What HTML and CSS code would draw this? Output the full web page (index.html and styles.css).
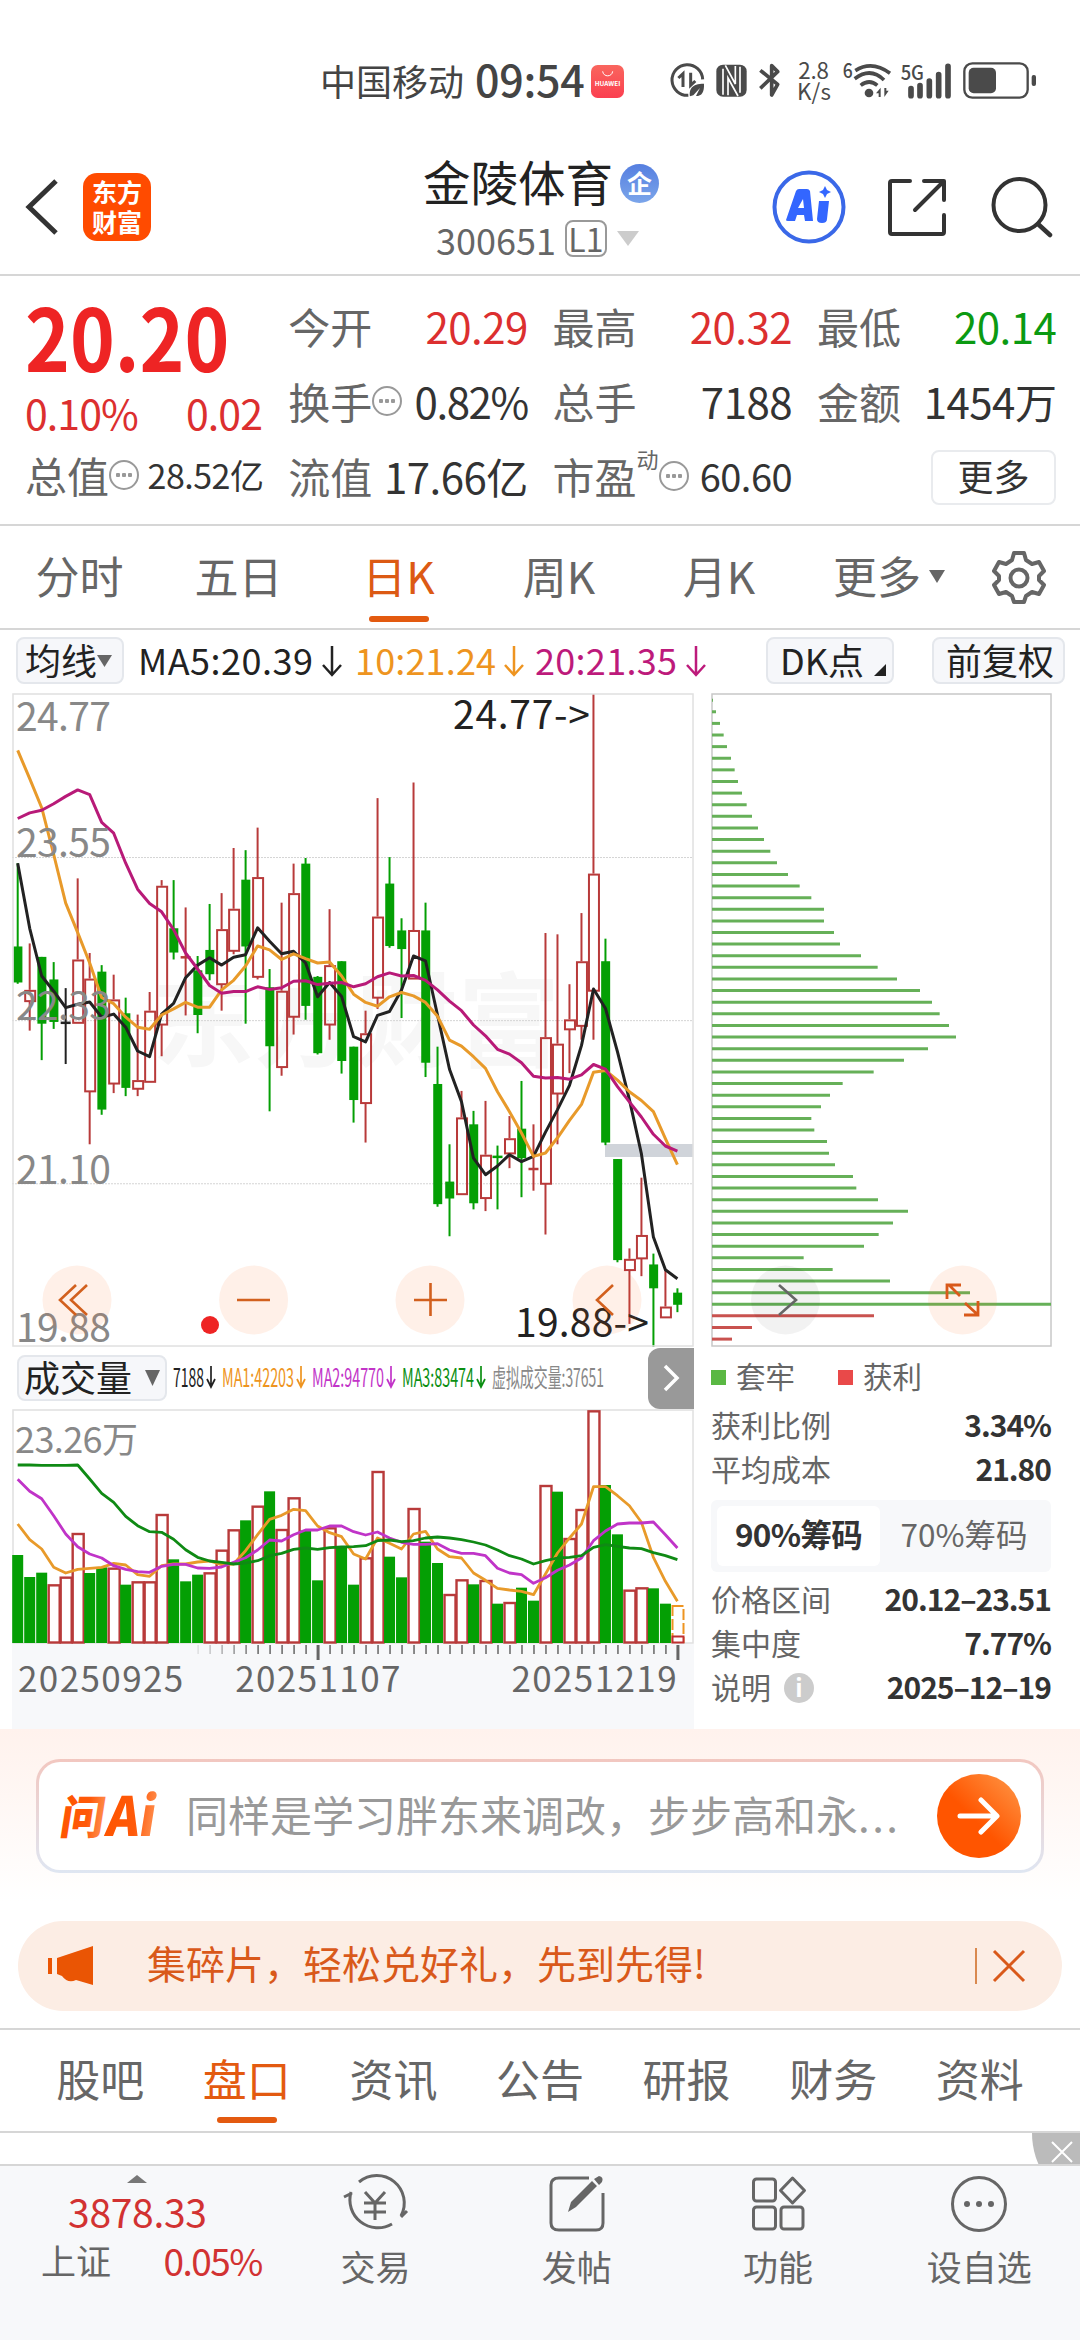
FILE: index.html
```html
<!DOCTYPE html>
<html lang="zh-CN">
<head>
<meta charset="utf-8">
<title>金陵体育 300651</title>
<link rel="stylesheet" href="styles.css">
</head>
<body>
<div class="status">
  <span class="carrier">中国移动</span>
  <span class="clock">09:54</span>
  <svg class="store" width="33" height="33" viewBox="0 0 99 99"><defs><linearGradient id="st" x1="0" y1="0" x2="0" y2="1"><stop offset="0" stop-color="#f9665e"/><stop offset="1" stop-color="#fb3f50"/></linearGradient></defs><rect width="99" height="99" rx="20" fill="url(#st)"/><path d="M35 19c2 18 28 18 30 0" fill="none" stroke="#fff" stroke-width="3"/><text x="11" y="63" textLength="77" lengthAdjust="spacingAndGlyphs" class="store-txt">HUAWEI</text></svg>
  <svg class="sys" width="370" height="64" viewBox="264 -3 1110 192">
    <g fill="none" stroke="#4a4a4a" stroke-width="9">
      <path d="M368 88A46 46 0 1 0 325 136M295 84l14-13v40M332 68v38l14-13"/>
      <path d="M541 61l52 42-18 32V47l18 18-52 50" stroke-width="11" stroke-linejoin="round"/>
      <path d="M826 62q50-32 104 8M824 86q48-36 88 4M842 106q26-20 50 0" stroke-width="11"/>
      <rect x="1153" y="40" width="190" height="103" rx="24" stroke-width="7"/>
      <path d="M993 116v21M1020 107v30M1048 93v44M1076 74v63M1104 49v88" stroke-width="17" stroke-linecap="round"/>
    </g>
    <g fill="#4a4a4a">
      <path d="M372 101c-38 0-45 18-42 38l10-3 20-22-12 24c18 0 25-12 24-37z"/>
      <rect x="409" y="44" width="91" height="96" rx="20"/>
      <circle cx="867" cy="129" r="13"/><path d="M888 130l14-17v28h-6v-11zM926 122l-13 19v-27h6v8z"/>
      <rect x="1166" y="53" width="82" height="77" rx="15"/><rect x="1355" y="75" width="13" height="33" rx="6"/>
      <text x="655" y="86" font-size="67" textLength="92">2.8</text>
      <text x="651" y="149" font-size="67" textLength="102">K/s</text>
      <text x="788" y="84" font-size="60" font-weight="500" textLength="30" lengthAdjust="spacingAndGlyphs">6</text>
      <text x="962" y="90" font-size="60" font-weight="500" textLength="70" lengthAdjust="spacingAndGlyphs">5G</text>
    </g>
    <path d="M429 56v78M480 50v78M444 136V84l30 54M436 46l30 56V48" fill="none" stroke="#fff" stroke-width="5"/>
  </svg>
</div>

<header class="head">
  <svg class="back" width="34" height="56" viewBox="0 0 34 56"><path d="M31 2L4 28l27 26" fill="none" stroke="#333" stroke-width="5"/></svg>
  <div class="logo"><span>东方</span><span>财富</span></div>
  <div class="stock">
    <div class="name"><span>金陵体育</span><i class="badge">企</i></div>
    <div class="code"><span>300651</span><i class="lv">L1</i><svg width="22" height="15" viewBox="0 0 22 15"><path d="M0 0h22L11 15z" fill="#ccc"/></svg></div>
  </div>
  <svg class="ai" width="74" height="74" viewBox="0 0 74 74"><circle cx="37" cy="37" r="34.5" fill="none" stroke="#3a68e8" stroke-width="4"/><path d="M14 50l10-29q1-2 3-2h8q2 0 3 2l3 30h-8l-1-6h-7l-2 6h-7q-2 0-2-1zM26 38h6l-1-9zM47 31h10l-2 18q0 4-5 4t-5-4zM53 16l2 4 4 2-4 2-2 4-2-4-4-2 4-2z" fill="#3366ff" fill-rule="evenodd"/></svg>
  <svg class="share" width="60" height="60" viewBox="0 0 60 60"><g fill="none" stroke="#333" stroke-width="4" stroke-linecap="round" stroke-linejoin="round"><path d="M23 4H5q-2 0-2 2v49q0 2 2 2h50q2 0 2-2V38M37 4h20v19M56 5L28 33"/></g></svg>
  <svg class="find" width="62" height="62" viewBox="0 0 62 62"><circle cx="28.500" cy="29" r="26" fill="none" stroke="#333" stroke-width="4"/><path d="M47 48l12 11" stroke="#333" stroke-width="4.500" stroke-linecap="round"/></svg>
</header>

<section class="quote">
  <div class="col">
    <div class="price"><span>20.20</span></div>
    <div class="chg red"><span>0.10%</span><span>0.02</span></div>
    <div class="cell"><label>总值</label><i class="tip"></i><b class="small">28.52亿</b></div>
  </div>
  <div class="col">
    <div class="cell"><label>今开</label><b class="red">20.29</b></div>
    <div class="cell"><label>换手</label><i class="tip"></i><b class="pct">0.82%</b></div>
    <div class="cell"><label>流值</label><b>17.66亿</b></div>
  </div>
  <div class="col">
    <div class="cell"><label>最高</label><b class="red">20.32</b></div>
    <div class="cell"><label>总手</label><b>7188</b></div>
    <div class="cell"><label>市盈</label><sup>动</sup><i class="tip"></i><b class="mid">60.60</b></div>
  </div>
  <div class="col">
    <div class="cell"><label>最低</label><b class="green">20.14</b></div>
    <div class="cell"><label>金额</label><b>1454万</b></div>
    <div class="cell"><span class="more">更多</span></div>
  </div>
</section>

<nav class="periods">
  <span>分时</span><span>五日</span><span class="on">日K</span><span>周K</span><span>月K</span>
  <span class="drop">更多<svg width="16" height="13" viewBox="0 0 16 13"><path d="M0 0h16L8 13z" fill="#666"/></svg></span>
  <svg class="gear" width="54" height="54" viewBox="0 0 54 54"><g fill="none" stroke="#666" stroke-width="4" stroke-linejoin="round"><path d="M22 3h10l2 7 6 4 7-2 5 9-5 5v4l5 5-5 9-7-2-6 4-2 6H22l-2-6-6-4-7 2-5-9 5-5v-4l-5-5 5-9 7 2 6-4z"/><circle cx="27" cy="28" r="8.500"/></g></svg>
</nav>

<div class="ma">
  <span class="btn b1">均线<svg width="15" height="12" viewBox="0 0 15 12"><path d="M0 0h15L7.500 12z" fill="#666"/></svg></span>
  <svg class="ma-txt" width="580" height="56" viewBox="134 632 580 56">
    <g font-size="36"><text x="138" y="674" textLength="175" fill="#222">MA5:20.39</text><text x="355" y="674" textLength="141" fill="#ee9420">10:21.24</text><text x="535" y="674" textLength="142" fill="#bd1a7b">20:21.35</text></g>
    <g fill="none" stroke-width="2.500"><path d="M332 645v29m-9-10l9 10 9-10" stroke="#222"/><path d="M514 645v29m-9-10l9 10 9-10" stroke="#ee9420"/><path d="M696 645v29m-9-10l9 10 9-10" stroke="#bd1a7b"/></g>
  </svg>
  <span class="btn b2">DK点<svg width="12" height="12" viewBox="0 0 12 12"><path d="M12 0v12H0z" fill="#222"/></svg></span>
  <span class="btn b3">前复权</span>
</div>

<main class="charts">
  <div class="left">
    <svg id="kline" width="682" height="654" viewBox="0 0 682 654"></svg>
    <div class="volbar">
      <span class="btn b4">成交量<svg width="15" height="16" viewBox="0 0 15 16"><path d="M0 0h15L7.500 16z" fill="#666"/></svg></span>
      <svg width="440" height="44" viewBox="0 0 440 44">
        <g font-size="25"><text x="0" y="31" textLength="31" lengthAdjust="spacingAndGlyphs" fill="#222">7188</text><text x="49" y="31" textLength="72" lengthAdjust="spacingAndGlyphs" fill="#ee9420">MA1:42203</text><text x="139" y="31" textLength="72" lengthAdjust="spacingAndGlyphs" fill="#c234c8">MA2:94770</text><text x="229" y="31" textLength="72" lengthAdjust="spacingAndGlyphs" fill="#0b8f12">MA3:83474</text><text x="319" y="31" textLength="112" lengthAdjust="spacingAndGlyphs" fill="#888">虚拟成交量:37651</text></g>
        <g fill="none" stroke-width="1.700"><path d="M38 10v21m-4-8l4 8 4-8" stroke="#222"/><path d="M128 10v21m-4-8l4 8 4-8" stroke="#ee9420"/><path d="M218 10v21m-4-8l4 8 4-8" stroke="#c234c8"/><path d="M308 10v21m-4-8l4 8 4-8" stroke="#0b8f12"/></g>
      </svg>
      <span class="next"><svg width="17" height="28" viewBox="0 0 17 28"><path d="M2 2l12 12L2 26" fill="none" stroke="#fff" stroke-width="3.500"/></svg></span>
    </div>
    <svg id="volume" width="682" height="235" viewBox="0 0 682 235"></svg>
    <div class="axis">
      <svg id="ticks" width="682" height="18" viewBox="0 0 682 18"></svg>
      <div class="dates"><span>20250925</span><span>20251107</span><span>20251219</span></div>
    </div>
  </div>
  <aside class="chips">
    <svg id="chips" width="341" height="654" viewBox="0 0 341 654"></svg>
    <div class="legend"><i class="g"></i><span>套牢</span><i class="r"></i><span>获利</span></div>
    <div class="row"><span>获利比例</span><b>3.34%</b></div>
    <div class="row"><span>平均成本</span><b>21.80</b></div>
    <div class="toggle"><span class="on">90%筹码</span><span>70%筹码</span></div>
    <div class="row"><span>价格区间</span><b>20.12–23.51</b></div>
    <div class="row"><span>集中度</span><b>7.77%</b></div>
    <div class="row"><span>说明</span><i class="info">i</i><b>2025–12–19</b></div>
  </aside>
</main>

<section class="ask">
  <div class="askbox">
    <svg class="asklogo" width="100" height="70" viewBox="0 -12 100 70"><defs><linearGradient id="lg"><stop offset="0" stop-color="#f50"/><stop offset=".6" stop-color="#ff5a0a"/><stop offset="1" stop-color="#ff9152"/></linearGradient></defs><g transform="skewX(-9)" fill="url(#lg)"><text x="6" y="41" font-size="46" font-weight="900" textLength="44" lengthAdjust="spacingAndGlyphs">问</text><text x="52" y="43" font-size="54" font-weight="900" textLength="49" lengthAdjust="spacingAndGlyphs">Ai</text></g></svg>
    <span class="hint">同样是学习胖东来调改，步步高和永<span class="dots">...</span></span>
    <span class="go"><svg width="44" height="38" viewBox="0 0 44 38"><path d="M3 19h36M24 3l16 16-16 16" fill="none" stroke="#fff" stroke-width="5" stroke-linecap="round" stroke-linejoin="round"/></svg></span>
  </div>
</section>

<div class="notice">
  <svg width="46" height="40" viewBox="0 0 46 40"><path d="M0 12h4v16H0zM9 12L45 0v39l-17-5q-8 4-14-4l-5-2z" fill="#ea5504"/></svg>
  <span class="msg">集碎片，轻松兑好礼，先到先得!</span>
  <i class="bar"></i>
  <svg width="34" height="34" viewBox="0 0 34 34"><path d="M2 2l30 30M32 2L2 32" stroke="#d9591a" stroke-width="3"/></svg>
</div>

<nav class="tabs"><span>股吧</span><span class="on">盘口</span><span>资讯</span><span>公告</span><span>研报</span><span>财务</span><span>资料</span></nav>
<div class="gap"><span class="close"><svg width="22" height="22" viewBox="0 0 22 22"><path d="M1 1l20 20M21 1L1 21" stroke="#fff" stroke-width="2"/></svg></span></div>

<footer class="dock">
  <div class="index">
    <svg width="20" height="8" viewBox="0 0 20 8"><path d="M10 0l10 8H0z" fill="#777"/></svg>
    <span class="pt">3878.33</span>
    <div class="idx"><span>上证</span><span class="pc">0.05%</span></div>
  </div>
  <div class="item"><svg width="70" height="62" viewBox="0 0 70 62"><g fill="none" stroke="#666" stroke-width="3"><path d="M19 9A27.500 27.500 0 0 1 61 43M61 44l6-6M52 51A28 28 0 0 1 11 19M12 20l-8 4"/><path d="M25 19l10 11 10-11M24 30h22M24 39h22M35 30v17"/></g></svg><span>交易</span></div>
  <div class="item"><svg width="70" height="62" viewBox="0 0 70 62"><path d="M47 5H17q-8 0-8 7v38q0 7 8 7h37q7 0 7-7V20" fill="none" stroke="#666" stroke-width="3"/><path d="M26 39l3-10L50 8l5 5-21 21zM52 6l5-3q5 1 3 6l-3 3z" fill="#666"/></svg><span>发帖</span></div>
  <div class="item"><svg width="70" height="62" viewBox="0 0 70 62"><g fill="none" stroke="#666" stroke-width="3"><rect x="10.500" y="6" width="22" height="22" rx="3"/><rect x="10.500" y="34" width="22" height="22" rx="3"/><rect x="38" y="34" width="22" height="22" rx="3"/><path d="M49.500 5l12 12.500-12 12.500-12-12.500z" stroke-linejoin="round"/></g></svg><span>功能</span></div>
  <div class="item"><svg width="70" height="62" viewBox="0 0 70 62"><circle cx="35" cy="31" r="26.500" fill="none" stroke="#666" stroke-width="3"/><g fill="#666"><circle cx="23" cy="31" r="3"/><circle cx="35" cy="31" r="3"/><circle cx="47" cy="31" r="3"/></g></svg><span>设自选</span></div>
</footer>
<script src="chart.js"></script>
</body>
</html>
```
FILE: styles.css
```css
* { box-sizing: border-box; }
body { margin: 0; width: 1080px; height: 2340px; overflow: hidden; background: #fff; color: #333; font-family: "Noto Sans CJK SC", "Noto Sans", sans-serif; line-height: 1; }
i, b { font-style: normal; font-weight: 400; }
svg { display: block; flex: none; }
span, label, b, sup { white-space: nowrap; }
.red { color: #dc2f2f !important; }
.green { color: #0b9a12 !important; }

.status { height: 140px; padding: 22px 0 0 320px; display: flex; align-items: center; color: #444; }
.carrier { font-size: 36px; width: 155px; padding-bottom: 3px; }
.clock { font-size: 43px; width: 116px; letter-spacing: -.3px; padding-bottom: 6px; font-weight: 500; }
.sys { margin-left: 44px; }
.store-txt { font-size: 17px; font-weight: 700; fill: #fff; }

.head { height: 136px; border-bottom: 2px solid #d6d6d6; display: flex; align-items: center; padding-left: 25px; }
.logo { width: 68px; height: 68px; margin-left: 24px; border-radius: 14px; background: #ff4b00; color: #fff; font-size: 25px; font-weight: 700; display: flex; flex-direction: column; align-items: center; justify-content: center; gap: 4px; padding-bottom: 3px; }
.logo span { line-height: 26px; }
.stock { width: 240px; margin-left: 272px; padding-bottom: 1px; }
.name { display: flex; align-items: center; gap: 7px; font-size: 47.5px; color: #222; height: 64px; }
.name > span { padding-bottom: 2px; }
.badge { width: 39px; height: 39px; margin-top: 4px; border-radius: 50%; background: linear-gradient(#567fe0, #7ba5ea); color: #fff; font-size: 25px; font-weight: 700; display: flex; align-items: center; justify-content: center; padding-bottom: 3px; }
.code { display: flex; align-items: center; font-size: 36px; color: #666; margin-left: 13px; height: 50px; }
.lv { border: 2px solid #999; border-radius: 8px; width: 42px; height: 37px; margin: 0 10px 0 9px; font-size: 32px; display: flex; align-items: center; justify-content: center; padding-bottom: 2px; }
.ai { margin-left: 109px; }
.share { margin-left: 41px; }
.find { margin-left: 44px; }

.quote { height: 250px; padding: 15px 25px 0; border-bottom: 2px solid #d6d6d6; display: grid; grid-template-columns: 237px 238px 238px 238px; column-gap: 26.300px; }
.price { height: 96px; line-height: 88px; font-size: 86px; font-weight: 700; color: #ee2424; }
.price span { display: inline-block; transform: scaleX(.885); transform-origin: 0 50%; }
.chg { height: 53px; line-height: 50px; font-size: 41px; letter-spacing: -.9px; display: flex; justify-content: space-between; }
.cell { height: 75px; display: flex; align-items: center; padding-bottom: 6px; }
.cell label { font-size: 42px; color: #666; }
.cell b { margin: 0 -1.5px 0 auto; font-size: 42px; letter-spacing: -.5px; }
.cell b.pct { letter-spacing: -1.4px; }
.cell b.small { font-size: 34px; }
.cell b.mid { font-size: 38px; }
.cell sup { font-size: 22px; color: #666; margin-bottom: 36px; vertical-align: baseline; }
.tip { width: 30px; height: 30px; border: 2px solid #999; border-radius: 50%; background: radial-gradient(circle at 7px 13px, #999 2px, transparent 2.500px), radial-gradient(circle at 13px 13px, #999 2px, transparent 2.500px), radial-gradient(circle at 19px 13px, #999 2px, transparent 2.500px); }
.more { margin: 3px -1px 0 auto; width: 125px; height: 55px; border: 2px solid #e9ebee; border-radius: 8px; font-size: 36px; line-height: 46px; text-align: center; }

.periods { height: 104px; border-bottom: 2px solid #d6d6d6; display: grid; grid-template-columns: 159px 159px 161px 160px 160px 180px 72px; align-items: center; text-align: center; font-size: 44px; color: #666; }
.periods span, .tabs span { height: 100%; display: flex; align-items: center; justify-content: center; border-bottom: 6px solid transparent; padding-top: 1px; }
.on { position: relative; color: #dc5a14; }
.periods .on::after, .tabs .on::after { content: ""; position: absolute; bottom: 0; left: 50%; margin-left: -30px; width: 60px; height: 6px; border-radius: 3px; background: #e35a10; }
.drop svg { margin: 4px 0 0 8px; }
.gear { margin-left: 13px; }

.ma { height: 63px; display: flex; align-items: center; padding: 0 0 2px 16px; font-size: 36px; }
.btn { height: 47px; border: 2px solid #e4e7ec; border-radius: 8px; background: #f6f7fa; color: #222; display: flex; align-items: center; padding: 0 0 4px 7px; }
.btn svg { margin-top: 4px; }
.b1 { width: 108px; }
.ma-txt { margin-left: 10px; }
.b2 { width: 128px; margin-left: 52px; padding-left: 12px; }
.b2 svg { margin: 22px 0 0 10px; }
.b3 { width: 133px; margin-left: 38px; padding-left: 12px; }

.charts { display: flex; height: 1036px; }
.left { width: 682px; margin-left: 12px; }
.volbar { height: 62px; display: flex; align-items: center; padding-left: 5px; }
.b4 { width: 150px; height: 46px; font-size: 36px; padding-left: 5px; }
.b4 svg { margin-left: 13px; }
.volbar > svg { margin-left: 6px; }
.next { margin-left: auto; width: 46px; height: 61px; background: #999; border-radius: 12px 0 0 12px; display: flex; align-items: center; justify-content: center; }
.axis { height: 85px; background: #f7f8fa; }
.dates { display: flex; justify-content: space-between; padding: 0 16px 0 6px; font-size: 35px; line-height: 30px; letter-spacing: 1.400px; color: #666; }
.dates span:nth-child(2) { margin-left: -59px; }
.chips { width: 341px; margin-left: 17px; }
.legend { height: 57px; display: flex; align-items: center; font-size: 29.500px; color: #666; }
.legend i { width: 15px; height: 15px; margin: 4px 10px 0 0; background: #5ab843; }
.legend .r { margin-left: 43px; background: #e94949; }
.row { height: 44px; display: flex; align-items: center; padding: 0 1px 5px 0; font-size: 30px; color: #666; }
.row b { margin-left: auto; color: #333; font-weight: 700; letter-spacing: -1px; }
.toggle { height: 72px; margin: 8px 1px 6px 0; padding: 6px; background: #f7f8fa; border-radius: 6px; display: flex; font-size: 31.500px; color: #666; }
.toggle span { flex: 1; display: flex; align-items: center; justify-content: center; border-radius: 6px; padding: 0 0 5px 3px; }
.toggle .on { flex: 0 0 163px; background: #fff; color: #333; font-weight: 700; letter-spacing: -.7px; padding-left: 0; }
.info { width: 30px; height: 30px; border-radius: 50%; background: #ccc; color: #fff; font-weight: 700; font-size: 24px; margin: 4px 0 0 13px; display: flex; align-items: center; justify-content: center; padding-bottom: 2px; }

.ask { height: 192px; padding: 30px 36px 0; background: linear-gradient(#fff2ed, #fff 90%); }
.askbox { height: 114px; border: 3px solid transparent; border-radius: 24px; background: linear-gradient(#fff, #fff) padding-box, linear-gradient(#f2c7c0, #dfe6f2) border-box; display: flex; align-items: center; padding-left: 20px; }
.hint { margin-left: 27px; width: 720px; font-size: 42px; padding-bottom: 4px; color: #999; }
.dots { letter-spacing: 2.500px; }
.go { margin-left: 31px; width: 84px; height: 84px; border-radius: 50%; background: linear-gradient(45deg, #ff5500 45%, #ff9a4a); display: flex; align-items: center; justify-content: center; }

.notice { height: 90px; margin: 0 18px 17px; border-radius: 45px; background: #fcede4; display: flex; align-items: center; padding-left: 30px; color: #d9591a; font-size: 39px; }
.msg { margin-left: 53px; width: 828px; padding-bottom: 8px; }
.bar { width: 2px; height: 36px; background: #d9894f; margin-right: 15px; }

.tabs { height: 105px; border-top: 2px solid #d6d6d6; border-bottom: 2px solid #d6d6d6; display: flex; padding: 0 27px; font-size: 44px; color: #666; }
.tabs span { flex: 1; padding-top: 0; }
.tabs .on { color: #e35a10; }
.tabs .on::after { bottom: 2px; }
.gap { height: 31px; display: flex; justify-content: flex-end; overflow: hidden; }
.close { width: 48px; height: 62px; background: #bbb; border-bottom-left-radius: 48px 62px; padding: 8px 0 0 19px; }

.dock { height: 176px; background: #f7f8fa; border-top: 2px solid #d6d6d6; display: flex; color: #666; }
.index { width: 275px; display: flex; flex-direction: column; align-items: center; padding-top: 9px; }
.pt { font-size: 39px; color: #d23232; margin-top: 8px; line-height: 40px; letter-spacing: -.3px; }
.idx { width: 221px; display: flex; justify-content: space-between; margin-top: 9px; margin-left: 28px; font-size: 35px; line-height: 40px; }
.pc { color: #d23232; font-size: 37px; letter-spacing: -1.500px; }
.item { width: 201.500px; display: flex; flex-direction: column; align-items: center; padding-top: 7px; font-size: 35px; }
.item span { line-height: 40px; margin-top: 11px; }
```
FILE: chart.js
```js
// Each day: colour, high, body top, body bottom, low (plot units, 30 = top edge, 1533 = bottom edge)
const days = `G 420 612 695 698|R 605 712 738 806|G 636 636 790 874|G 648 688 786 802|K 708 788 788 883|R 455 642 788 788|R 627 686 946 1068|G 655 670 988 1000|R 677 734 928 950|G 730 766 938 957|R 769 920 940 957|R 717 760 924 924|R 459 472 792 865|G 459 570 626 642|R 522 637 637 771|G 634 667 770 812|G 514 620 676 690|R 489 572 699 760|R 385 525 622 630|G 390 458 612 790|R 338 452 682 688|G 664 706 842 992|R 511 714 890 910|R 421 489 774 815|G 408 421 749 781|G 680 682 858 861|R 526 655 792 827|G 646 646 876 905|G 843 843 966 1018|R 760 812 973 1064|R 270 543 730 756|G 406 467 611 615|G 547 575 618 777|R 234 574 686 686|G 511 575 880 913|G 843 929 1206 1212|G 1068 1154 1193 1280|R 945 1006 1183 1183|G 991 1022 1204 1218|R 968 1092 1192 1222|G 1071 1097 1097 1218|R 1003 1054 1089 1123|G 922 1032 1100 1190|R 1022 1125 1125 1175|R 581 821 1159 1276|R 584 836 951 1068|R 699 780 803 904|R 535 646 795 827|R 30 444 714 827|G 594 646 1064 1070|G 1102 1102 1335 1340|R 1308 1332 1358 1482|R 1145 1277 1331 1372|G 1320 1345 1400 1536|R 1358 1442 1467 1467|G 1400 1410 1438 1455`.split('|').map(s => s.split(' '));
const ma5 = [420,570,680,715,753,745,740,775,768,798,853,866,768,743,684,655,638,655,637,631,569,600,629,623,650,728,695,727,820,832,771,762,712,634,645,770,895,970,1100,1138,1118,1092,1108,1096,1040,988,932,840,710,755,855,965,1090,1282,1357,1378];
const ma10 = [160,225,292,400,512,580,650,730,744,775,798,803,770,756,741,752,752,712,690,657,611,620,642,629,640,650,648,680,722,741,750,728,718,726,741,773,828,842,866,893,947,993,1042,1096,1088,1053,1013,976,902,898,920,947,967,993,1055,1115];
const ma20 = [317,304,298,283,266,251,262,326,351,420,480,513,532,573,627,664,702,720,716,716,705,711,707,692,691,700,697,695,705,698,682,673,680,679,690,712,738,760,793,818,849,860,880,911,915,914,918,908,884,895,935,970,1005,1045,1072,1084];
const RED = '#b83a3a', GREEN = '#049f04';
const X = i => 5.7 + i * 11.995;
const Y = v => 1 + (v - 30) * 0.4338;
const path = (a, f, c, w) => `<path d="M${a.map((v, i) => X(i).toFixed(1) + ' ' + f(v).toFixed(1)).join('L')}" fill="none" stroke="${c}" stroke-width="${w}" stroke-linejoin="round"/>`;
const line = (x1, y1, x2, y2, c, w, extra = '') => `<line x1="${x1}" y1="${y1}" x2="${x2}" y2="${y2}" stroke="${c}" stroke-width="${w}" ${extra}/>`;
const label = (x, y, w, t, c, size = 39) => `<text x="${x}" y="${y}" font-size="${size}" textLength="${w}" fill="${c}">${t}</text>`;

let k = '<text x="140" y="366" font-size="102" font-weight="700" fill="#f7f7f7">东方财富</text>';
[407, 783, 1159].forEach(v => k += line(0, Y(v), 681, Y(v), '#d4d4d4', 1, 'stroke-dasharray="2 1"'));
k += '<rect x="593" y="451" width="88" height="13" fill="#d0d4da"/>';
days.forEach(([c, ...n], i) => {
  const [h, t, b, l] = n.map(v => Y(+v)), x = X(i), col = c === 'G' ? GREEN : c === 'R' ? RED : '#222';
  if (b - t < 1) { k += line(x, h, x, l, col, 2) + line(x - 5, t, x + 5, t, col, 2.5); return; }
  if (c === 'G') k += line(x, h, x, l, col, 2) + `<rect x="${x - 4.3}" y="${t}" width="9" height="${b - t}" fill="${col}"/>`;
  else k += line(x, h, x, t, col, 2) + line(x, b, x, l, col, 2) + `<rect x="${x - 4.5}" y="${t + 1}" width="10" height="${b - t - 1}" fill="none" stroke="${col}" stroke-width="2"/>`;
});
k += path(ma5, Y, '#222', 3) + path(ma10, Y, '#e89a2a', 3) + path(ma20, Y, '#b81a78', 3);
[['24.77', 39], ['23.55', 164.500], ['22.33', 328], ['21.10', 491.500], ['19.88', 650]].forEach(([t, y]) => k += label(4, y - 1, 95, t, '#888'));
k += label(441, 36, 137, '24.77-&gt;', '#222') + label(503, 643.500, 134, '19.88-&gt;', '#222');
k += '<circle cx="198" cy="632" r="9" fill="#ee2424"/>';
[65, 241.600, 418, 595].forEach(x => k += `<circle cx="${x}" cy="607" r="34.500" fill="#fb6a20" fill-opacity=".1"/>`);
k += '<path d="M64 592L48 607l16 15M75 592L59 607l16 15M225 607h33M402 607h33M418.500 590v33M601 592l-16 15 16 15" fill="none" stroke="#d2601e" stroke-width="2.600"/>';
k += '<rect x="1" y="1" width="680" height="652" fill="none" stroke="#e0e0e0" stroke-width="1.500"/>';
document.getElementById('kline').innerHTML = k;

// Volume: bar tops in thirds of a pixel, 207 = top edge, 907 = baseline
const tops = [643,709,696,731,708,577,697,680,681,732,722,722,520,656,722,702,695,627,566,539,495,452,565,470,570,719,560,622,732,650,391,648,710,502,603,667,760,716,731,718,789,784,741,780,433,453,592,505,209,433,581,747,740,743,789];
const redBars = new Set([3,4,5,8,10,11,12,16,17,18,20,22,23,26,29,30,33,36,37,39,41,44,46,47,48,51,52]);
const v1 = [550,597,625,680,697,686,683,680,668,673,702,707,675,670,670,664,661,672,670,630,582,536,524,506,510,556,576,588,640,655,592,608,625,580,572,625,648,652,697,719,743,748,752,762,700,637,592,550,438,438,465,495,545,650,722,782];
const v2 = [416,452,474,525,580,618,640,652,675,686,693,695,677,671,671,682,683,679,665,651,628,598,601,582,568,568,556,556,573,583,574,592,605,611,611,609,628,638,638,645,683,697,702,728,711,689,673,652,600,571,550,547,547,544,582,622];
const v3 = [373,373,374,374,374,373,415,458,485,527,555,573,575,596,627,650,661,665,670,667,660,645,638,626,622,626,621,619,618,615,600,598,603,600,592,589,592,597,604,613,628,645,655,670,660,652,650,645,620,612,617,622,624,636,645,657];
const V = v => (v - 205) / 3;
let m = '<rect x="1" y="1" width="680" height="233" fill="none" stroke="#e0e0e0" stroke-width="1.500"/>';
tops.forEach((t, i) => {
  const x = X(i), y = V(t), h = 234 - y;
  m += redBars.has(i) ? `<rect x="${x - 5}" y="${y + 1}" width="11" height="${h - 1.5}" fill="#fff" stroke="${RED}" stroke-width="2.400"/>`
    : `<rect x="${x - 5.5}" y="${y}" width="11" height="${h}" fill="${GREEN}"/>`;
});
m += '<rect x="660.500" y="197" width="11" height="36" fill="none" stroke="#ee9420" stroke-width="2" stroke-dasharray="11 3"/><rect x="660.500" y="227.500" width="11" height="6" fill="#fff" stroke="#c03030" stroke-width="2"/>';
m += path(v1, V, '#e89a2a', 2.8) + path(v2, V, '#c034c8', 2.8) + path(v3, V, '#0f8a14', 2.8) + label(3, 44, 123, '23.26万', '#888', 36);
document.getElementById('volume').innerHTML = m;

let tk = '';
for (let i = 15; i < 56; i++) {
  const big = i === 25 || i === 55;
  tk += line(X(i) + .5, 1, X(i) + .5, big ? 16 : 10, '#666', big ? 3 : 1.5, `opacity="${Math.min(1, (i - 14) / 6)}"`);
}
document.getElementById('ticks').innerHTML = tk;

// Chip distribution: bar lengths in thirds of a pixel
const chips = [3,12,24,35,45,57,68,78,90,104,120,138,156,175,195,228,263,298,336,336,366,384,447,497,555,624,660,683,711,732,648,576,485,392,354,327,298,307,345,351,369,423,433,498,588,543,500,456,275,362,534,774,1017,486,120,60];
let c = '<rect x="1" y="1" width="339" height="652" fill="none" stroke="#c8c8c8" stroke-width="1.500"/>';
chips.forEach((n, i) => { const y = Y(44.2 + i * 26.78); c += line(1, y, 1 + n / 3, y, i > 52 ? '#c9524f' : '#66b058', 3); });
c += '<circle cx="74.500" cy="607" r="34.500" fill="#000" fill-opacity=".05"/><circle cx="251.500" cy="607" r="34.500" fill="#fb6a20" fill-opacity=".1"/>';
c += '<path d="M68 592l17 15-17 15" fill="none" stroke="#666" stroke-width="2.600"/><path d="M249 603l-11-11M236 606v-14h14M254 610l12 11M253 622h14v-14" fill="none" stroke="#d9591a" stroke-width="2.800"/>';
document.getElementById('chips').innerHTML = c;
```
